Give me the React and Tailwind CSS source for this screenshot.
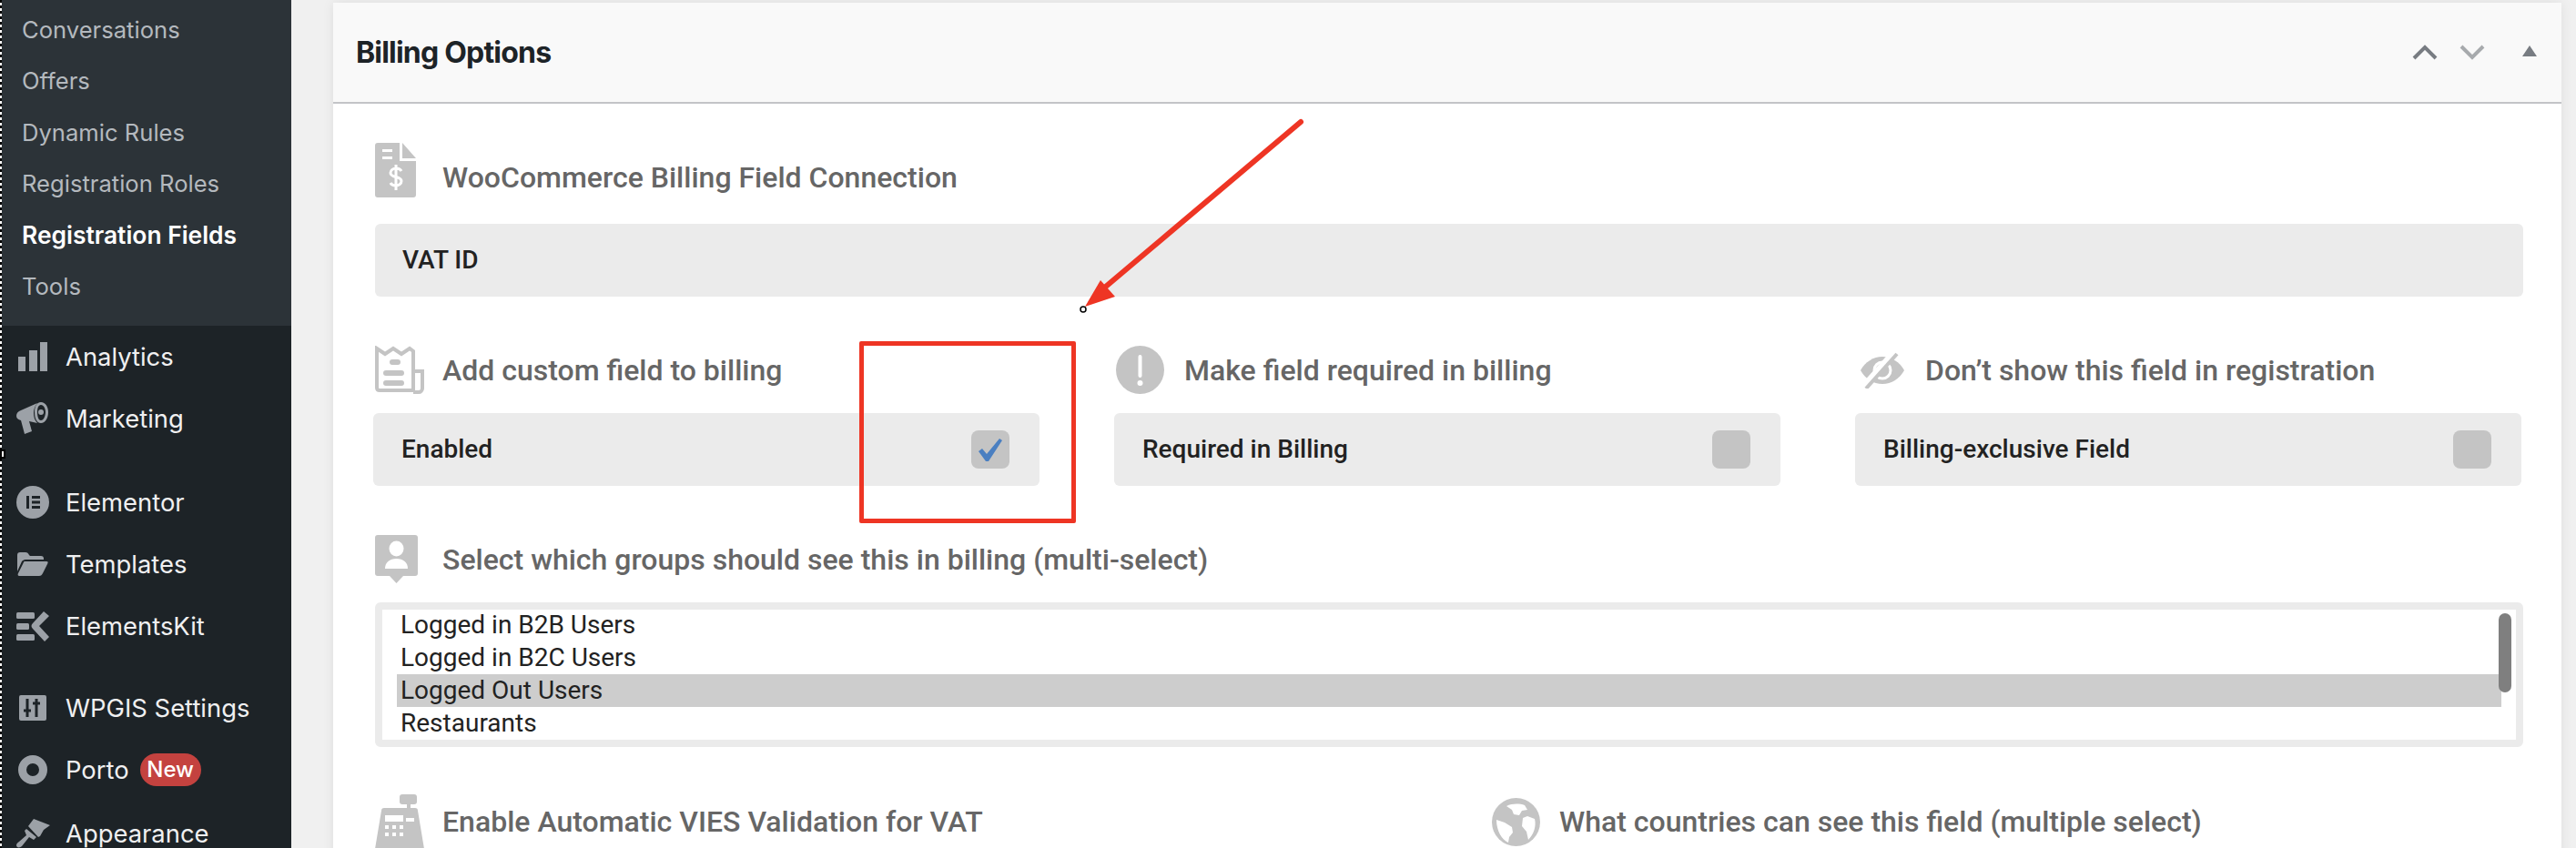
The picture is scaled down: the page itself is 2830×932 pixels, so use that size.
const subItems = [
  { label: "Conversations" },
  { label: "Offers" },
  { label: "Dynamic Rules" },
  { label: "Registration Roles" },
  { label: "Registration Fields", active: true },
  { label: "Tools" },
];

const groupOptions = ["Logged in B2B Users", "Logged in B2C Users", "Logged Out Users", "Restaurants"];

function BarsIcon() {
  return (
    <svg width="32" height="32" viewBox="0 0 32 32" fill="#9ca1a7">
      <rect x="0" y="16" width="8" height="16" />
      <rect x="12" y="9" width="9" height="23" />
      <rect x="24" y="0" width="8" height="32" />
    </svg>
  );
}

function MegaphoneIcon() {
  return (
    <svg width="36" height="36" viewBox="0 0 36 36" fill="#9ca1a7">
      <path d="M0 15c0-3 2-5 5-6L23 1c-3 4-4 7-4 11s1 8 4 11l-9-2 3 11-8 3-4-15c-3-1-5-2-5-5z" />
      <path fillRule="evenodd" d="M27 0c5 0 8 5 8 11s-3 12-8 12-7-6-7-12 2-11 7-11zm0 3c-3 0-4 4-4 8s1 9 4 9 5-5 5-9-2-8-5-8z" />
      <circle cx="27" cy="11" r="3" />
    </svg>
  );
}

function ElementorIcon() {
  return (
    <svg width="36" height="36" viewBox="0 0 36 36">
      <circle cx="18" cy="18" r="18" fill="#9ca1a7" />
      <rect x="11" y="11" width="3" height="14" fill="#1d2327" />
      <rect x="17" y="11" width="9" height="3" fill="#1d2327" />
      <rect x="17" y="16.5" width="9" height="3" fill="#1d2327" />
      <rect x="17" y="22" width="9" height="3" fill="#1d2327" />
    </svg>
  );
}

function FolderIcon() {
  return (
    <svg width="34" height="26" viewBox="0 0 34 26" fill="#9ca1a7">
      <path d="M0 3c0-2 1-3 3-3h6c2 0 3 1 4 3l1 1h12c2 0 3 1 3 3v1H9c-2 0-3 1-4 2L0 21V3z" />
      <path d="M8 10h24c2 0 2 1 1 3l-5 10c-1 2-2 3-4 3H2c-1 0-2-1-1-3l5-10c1-2 1-3 2-3z" />
    </svg>
  );
}

function ElementsKitIcon() {
  return (
    <svg width="36" height="33" viewBox="0 0 36 33" fill="#9ca1a7">
      <rect x="0" y="1" width="20" height="7" rx="1.5" />
      <rect x="0" y="13" width="14" height="7" rx="1.5" />
      <rect x="0" y="25" width="20" height="7" rx="1.5" />
      <path d="M30 0l6 5-11 11 11 12-5 5L18 19c-2-2-2-4 0-6z" />
    </svg>
  );
}

function SlidersIcon() {
  return (
    <svg width="30" height="28" viewBox="0 0 30 28">
      <rect width="30" height="28" rx="2" fill="#9ca1a7" />
      <path d="M9 4v20M19 4v20M5 17h8M15 9h8" stroke="#1d2327" strokeWidth="3" fill="none" />
    </svg>
  );
}

function RingIcon() {
  return (
    <svg width="32" height="32" viewBox="0 0 32 32">
      <circle cx="16" cy="16" r="11.5" fill="none" stroke="#9ca1a7" strokeWidth="9" />
    </svg>
  );
}

function BrushIcon() {
  return (
    <svg width="37" height="32" viewBox="0 0 37 32" fill="#9ca1a7">
      <path d="M13 8l6-8 18 7-7 5-4 7-2 1z" />
      <path d="M11 11l11 9-3 3-5-3-8 10c-2 2-6 2-6-1 0-1 1-3 3-4l8-7-2-5z" />
    </svg>
  );
}

function DocIcon() {
  return (
    <svg width="45" height="60" viewBox="0 0 45 60">
      <path d="M3 0h24v20h18v37a3 3 0 0 1-3 3H3a3 3 0 0 1-3-3V3a3 3 0 0 1 3-3z" fill="#c4c4c4" />
      <path d="M30 0l15 17H30z" fill="#c4c4c4" />
      <path d="M8 7h11v3H8zM8 15h11v3H8z" fill="#fff" />
      <path d="M29 31c-1-2-3-3-6-3-3 0-6 2-6 5 0 6 12 3 12 9 0 3-3 5-6 5-3 0-5-1-6-3M23 24v28" stroke="#fff" strokeWidth="3" fill="none" />
    </svg>
  );
}

function ReceiptIcon() {
  return (
    <svg width="54" height="53" viewBox="0 0 54 53" fill="none" stroke="#c4c4c4" strokeWidth="4">
      <path d="M2 3l9 6 9-6 9 6 9-6 4 3v43H5c-2 0-3-1-3-3z" />
      <path d="M42 28h10v19c0 2-2 4-4 4h-6" />
      <path d="M19 18h6M12 30h17M12 41h17" strokeWidth="6" strokeLinecap="round" />
    </svg>
  );
}

function AlertIcon() {
  return (
    <svg width="53" height="53" viewBox="0 0 53 53">
      <circle cx="26.5" cy="26.5" r="26.5" fill="#c4c4c4" />
      <path d="M26.5 12v21" stroke="#fff" strokeWidth="4" strokeLinecap="round" />
      <circle cx="26.5" cy="41" r="3" fill="#fff" />
    </svg>
  );
}

function EyeOffIcon() {
  return (
    <svg width="48" height="40" viewBox="0 0 48 40">
      <path d="M0 20C5 11 14 5 24 5s19 6 24 15c-5 9-14 15-24 15S5 29 0 20z" fill="#c4c4c4" />
      <circle cx="24" cy="20" r="9" fill="none" stroke="#fff" strokeWidth="3" />
      <path d="M37 0L3 38" stroke="#fff" strokeWidth="7" />
      <path d="M40 2L6 40" stroke="#c4c4c4" strokeWidth="4" />
    </svg>
  );
}

function PersonIcon() {
  return (
    <svg width="47" height="53" viewBox="0 0 47 53">
      <path d="M3 0h41a3 3 0 0 1 3 3v39a3 3 0 0 1-3 3H31l-7.500 8-7.500-8H3a3 3 0 0 1-3-3V3a3 3 0 0 1 3-3z" fill="#c4c4c4" />
      <ellipse cx="23.500" cy="15" rx="8" ry="8.500" fill="#fff" />
      <path d="M11 37c0-7 5-11 12.500-11S36 30 36 37z" fill="#fff" />
    </svg>
  );
}

function RegisterIcon() {
  return (
    <svg width="54" height="60" viewBox="0 0 54 60">
      <rect x="27" y="0" width="19" height="11" rx="3" fill="#c4c4c4" />
      <rect x="35" y="10" width="4" height="6" fill="#c4c4c4" />
      <path d="M10 15h34c2 0 3 1 3 3l7 42H0l7-42c0-2 1-3 3-3z" fill="#c4c4c4" />
      <path d="M11 23h20v7H11zM34 26h9v4h-9zM11 34h4v4h-4zM19 34h4v4h-4zM27 34h4v4h-4zM11 42h4v4h-4zM19 42h4v4h-4zM27 42h4v4h-4z" fill="#fff" />
    </svg>
  );
}

function GlobeIcon() {
  return (
    <svg width="53" height="53" viewBox="0 0 53 53">
      <circle cx="26.500" cy="26.500" r="26.500" fill="#c4c4c4" />
      <path d="M16 9c6-3 14-3 20-1l3 5-6 1-3 5-6-1-2-5z" fill="#fff" />
      <path d="M5 24l9 3 8 5 1 6-4 5-1 6C11 46 5 36 5 24z" fill="#fff" />
      <path d="M34 22l5-2 8 3c2 8-1 17-7 23l-2-9-5-6z" fill="#fff" />
    </svg>
  );
}

function MainItem({ icon, label, badge, className = "" }) {
  return (
    <div className={`flex h-[68px] items-center ${className}`}>
      <div className="flex w-[72px] shrink-0 justify-center">{icon}</div>
      <span className="text-[27.4px] text-[#f0f0f1]">{label}</span>
      {badge && (
        <span className="ml-[12px] flex h-[36px] w-[67px] items-center justify-center rounded-full bg-[#c4423f] text-[24px] font-medium text-white">
          {badge}
        </span>
      )}
    </div>
  );
}

function Sidebar() {
  return (
    <aside className="relative h-[932px] w-[320px] shrink-0 overflow-hidden bg-[#1d2327] font-['Inter',sans-serif]">
      <div className="bg-[#2c3338] pt-[5px] pb-[15px] pl-[24px]">
        {subItems.map((item) => (
          <div
            key={item.label}
            className={`flex h-[56.400px] items-center ${item.active ? "text-[26.400px] font-semibold text-white" : "text-[25.600px] text-[#b4b9be]"}`}
          >
            {item.label}
          </div>
        ))}
      </div>
      <MainItem icon={<BarsIcon />} label="Analytics" />
      <MainItem icon={<MegaphoneIcon />} label="Marketing" />
      <MainItem icon={<ElementorIcon />} label="Elementor" className="mt-[24px]" />
      <MainItem icon={<FolderIcon />} label="Templates" />
      <MainItem icon={<ElementsKitIcon />} label="ElementsKit" />
      <MainItem icon={<SlidersIcon />} label="WPGIS Settings" className="mt-[22px]" />
      <MainItem icon={<RingIcon />} label="Porto" badge="New" />
      <MainItem icon={<BrushIcon />} label="Appearance" className="mt-[2px]" />
      {/* selection marquee from the screen capture */}
      <div className="absolute top-0 left-0 h-full w-[2px] bg-[repeating-linear-gradient(to_bottom,#000_0,#000_3px,#fff_3px,#fff_6px)]" />
      <div className="absolute top-[494px] left-0 h-[10px] w-[6px] border-2 border-black bg-white" />
    </aside>
  );
}

function FieldLabel({ icon, children, className = "" }) {
  return (
    <div className={`flex items-center ${className}`}>
      {icon}
      <span className="text-[32px] leading-none font-medium text-[#666]">{children}</span>
    </div>
  );
}

function CheckField({ label, checked }) {
  return (
    <div className="flex h-[80px] items-center justify-between rounded-[6px] bg-[#ebebeb] pr-[33px] pl-[31px]">
      <span className="text-[28px] font-medium text-[#222]">{label}</span>
      <span className="flex h-[42px] w-[42px] items-center justify-center rounded-[8px] bg-[#c4c4c4]">
        {checked && (
          <svg width="26" height="25" viewBox="0 0 26 25">
            <path d="M0 14l4-3 5 6L23 0l3 2L11 25H8z" fill="#4a7fc1" />
          </svg>
        )}
      </span>
    </div>
  );
}

export default function App() {
  return (
    <div className="flex h-[932px] w-full overflow-hidden bg-[#f0f0f0] font-['Roboto',sans-serif]">
      <Sidebar />
      <main className="min-w-0 flex-1 pt-[3px] pr-[16px] pl-[46px]">
        <section className="relative h-[1200px] bg-white shadow-[0_0_12px_rgba(0,0,0,0.08)]">
          <header className="flex h-[111px] items-center justify-between border-b-2 border-[#c3c4c7] bg-[#f9f9f9] pr-[27px] pl-[25px]">
            <h2 className="font-['Inter',sans-serif] text-[32px] font-bold tracking-[-0.8px] text-[#1d2327]">Billing Options</h2>
            <div className="flex items-center">
              <svg width="28" height="17" viewBox="0 0 28 17" fill="none" className="mr-[24px]">
                <path d="M2 15L14 3l12 12" stroke="#787c82" strokeWidth="4" />
              </svg>
              <svg width="28" height="17" viewBox="0 0 28 17" fill="none" className="mr-[41px]">
                <path d="M2 2l12 12L26 2" stroke="#a7aaad" strokeWidth="4" />
              </svg>
              <svg width="16" height="12" viewBox="0 0 16 12" className="mb-[4px]">
                <path d="M8 0l8 12H0z" fill="#787c82" />
              </svg>
            </div>
          </header>

          <div className="pt-[43px] pr-[42px] pl-[46px]">
            <FieldLabel icon={<DocIcon />} className="h-[60px] gap-[29px] [&>span]:mt-[16px]">
              WooCommerce Billing Field Connection
            </FieldLabel>
            <div className="mt-[29px] flex h-[80px] items-center rounded-[6px] bg-[#ebebeb] pl-[30px] text-[28px] font-medium text-[#222]">
              VAT ID
            </div>

            <div className="mt-[54px] -ml-[2px] grid grid-cols-[732px_732px_732px] gap-x-[82px]">
              <div>
                <FieldLabel icon={<div className="ml-[2px]"><ReceiptIcon /></div>} className="h-[53px] gap-[20px]">
                  Add custom field to billing
                </FieldLabel>
                <div className="mt-[21px]">
                  <CheckField label="Enabled" checked />
                </div>
              </div>
              <div>
                <FieldLabel icon={<div className="ml-[2px]"><AlertIcon /></div>} className="h-[53px] gap-[22px]">
                  Make field required in billing
                </FieldLabel>
                <div className="mt-[21px]">
                  <CheckField label="Required in Billing" />
                </div>
              </div>
              <div>
                <FieldLabel icon={<div className="ml-[6px]"><EyeOffIcon /></div>} className="h-[53px] gap-[23px]">
                  Don’t show this field in registration
                </FieldLabel>
                <div className="mt-[21px]">
                  <CheckField label="Billing-exclusive Field" />
                </div>
              </div>
            </div>

            <FieldLabel icon={<PersonIcon />} className="mt-[54px] h-[53px] gap-[27px]">
              Select which groups should see this in billing (multi-select)
            </FieldLabel>

            <div className="relative mt-[21px] h-[159px] rounded-[6px] border-[8px] border-[#ebebeb] bg-white">
              <div className="-mt-[1px] pr-[16px] pl-[16px]">
                {groupOptions.map((option) => (
                  <div
                    key={option}
                    className={`flex h-[36px] items-center pb-[1px] pl-[4px] text-[28px] text-[#222] ${option === "Logged Out Users" ? "bg-[#cdcdcd]" : ""}`}
                  >
                    {option}
                  </div>
                ))}
              </div>
              <div className="absolute top-[4px] right-[5px] h-[87px] w-[14px] rounded-full bg-[#7f7f7f]" />
            </div>

            <div className="mt-[53px] grid grid-cols-2 gap-x-[82px]">
              <FieldLabel icon={<RegisterIcon />} className="h-[58px] gap-[20px]">
                Enable Automatic VIES Validation for VAT
              </FieldLabel>
              <FieldLabel icon={<div className="ml-[6px]"><GlobeIcon /></div>} className="h-[58px] gap-[21px]">
                What countries can see this field (multiple select)
              </FieldLabel>
            </div>
          </div>

          {/* annotation drawn over the screenshot */}
          <div className="absolute top-[372px] left-[578px] h-[200px] w-[238px] rounded-[2px] border-[5px] border-[#ee3524]" />
          <svg className="absolute top-[117px] left-[804px]" width="280" height="230" viewBox="0 0 280 230" fill="none">
            <path d="M259 14L40 199" stroke="#ee3524" strokeWidth="6" strokeLinecap="round" />
            <path d="M22 217L39 188L55 206z" fill="#ee3524" />
            <circle cx="20" cy="220" r="3" stroke="#000" strokeWidth="1.500" fill="#fff" />
          </svg>
        </section>
      </main>
    </div>
  );
}
